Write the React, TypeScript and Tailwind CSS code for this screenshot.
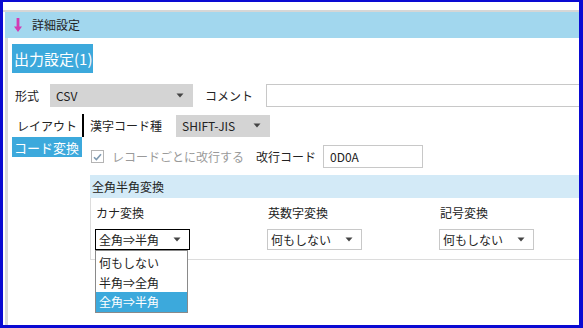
import React from 'react';

const Caret = () => (
  <svg width="8" height="5" viewBox="0 0 8 5" className="shrink-0">
    <path d="M0.5 0.5 L7.5 0.5 L4 4.5 Z" fill="#444" />
  </svg>
);

const GreySelect = ({ value, width }: { value: string; width: string }) => (
  <div className={`${width} h-full bg-[#d4d4d4] flex items-center justify-between pl-[6px] pr-[9px] text-[#222]`}>
    <span>{value}</span>
    <Caret />
  </div>
);

const App = () => {
  const columns = [
    { label: 'カナ変換', value: '全角⇒半角', open: true },
    { label: '英数字変換', value: '何もしない', open: false },
    { label: '記号変換', value: '何もしない', open: false },
  ];
  const options = ['何もしない', '半角⇒全角', '全角⇒半角'];

  return (
    <div className="w-[583px] h-[328px] overflow-hidden bg-white border-[#0a0ad2] border-l-[3px] border-t-[2px] border-r-[4px] border-b-[3px] flex flex-col text-[12px] leading-none font-['Noto_Sans_CJK_JP','Noto_Sans',sans-serif]">
      {/* top strip */}
      <div className="h-[8px] shrink-0" />
      <div className="h-[2px] shrink-0 bg-[#d6d6d6]" />

      {/* header */}
      <div className="ml-[2px] h-[26px] shrink-0 bg-[#a2d7ee] flex items-center">
        <svg width="8" height="14" viewBox="0 0 8 14" className="ml-[9px]">
          <path d="M2.6 0 H5.4 V8.5 H8 L4 14 L0 8.5 H2.6 Z" fill="#d23cb4" />
        </svg>
        <span className="ml-[10px] text-[#222]">詳細設定</span>
      </div>

      {/* body */}
      <div className="flex-1 ml-[2px] border-l-[3px] border-[#dadada] pl-[4px] flex flex-col">
        <div className="mt-[6px] h-[29px] w-[81px] bg-[#3ca9dc] text-white text-[15px] flex items-center pl-[2px]">
          出力設定(1)
        </div>

        {/* 形式 row */}
        <div className="mt-[11px] h-[23px] flex items-center text-[#222]">
          <span className="w-[38px] pl-[3px]">形式</span>
          <GreySelect value="CSV" width="w-[143px]" />
          <span className="ml-[12px] w-[61px]">コメント</span>
          <div className="flex-1 h-full border border-r-0 border-[#c8c8c8]" />
        </div>

        <div className="mt-[7px] flex">
          {/* side tabs */}
          <div className="flex flex-col w-[72px] shrink-0">
            <div className="h-[23px] border-r-2 border-black flex items-center justify-end pr-[5px] text-[#222]">
              レイアウト
            </div>
            <div className="w-[70px] h-[20px] bg-[#3ca9dc] text-white text-[13px] flex items-center pl-[2px]">
              コード変換
            </div>
          </div>

          <div className="ml-[6px] flex-1 flex flex-col relative">
            <div className="h-[23px] flex items-center text-[#222]">
              <span className="w-[86px]">漢字コード種</span>
              <div className="h-[22px] flex">
                <GreySelect value="SHIFT-JIS" width="w-[94px]" />
              </div>
            </div>

            <div className="mt-[8px] h-[23px] flex items-center">
              <div className="ml-[1px] w-[13px] h-[13px] border border-[#b4b4b4] bg-white flex items-center justify-center">
                <svg width="9" height="8" viewBox="0 0 9 8">
                  <path d="M1 4.2 L3.4 6.6 L8 1.2" fill="none" stroke="#7f9ab0" strokeWidth="1.6" />
                </svg>
              </div>
              <span className="ml-[8px] text-[#9a9a9a]">レコードごとに改行する</span>
              <span className="ml-[12px] text-[#222]">改行コード</span>
              <div className="ml-[7px] w-[100px] h-full border border-[#c8c8c8] flex items-center pl-[6px] text-[#222]">
                0D0A
              </div>
            </div>

            {/* 全角半角変換 group */}
            <div className="mt-[7px] flex flex-col">
              <div className="h-[23px] bg-[#d3eaf7] flex items-center pl-[2px] text-[#222]">全角半角変換</div>
              <div className="h-[62px] border-l border-b border-[#dcdcdc] flex pl-[4px] pt-[9px]">
                {columns.map((col) => (
                  <div key={col.label} className="w-[172px] flex flex-col">
                    <div className="h-[14px] pl-[1px] text-[#222]">{col.label}</div>
                    <div
                      className={`relative mt-[8px] w-[95px] h-[21px] border ${
                        col.open ? 'border-black' : 'border-[#c8c8c8]'
                      } flex items-center justify-between pl-[3px] pr-[8px] text-[#222]`}
                    >
                      <span>{col.value}</span>
                      <Caret />
                      {col.open && (
                        <div className="absolute left-[-1px] top-[20px] w-[93px] h-[63px] bg-white border border-[#8a8a8a] pt-[2px] flex flex-col z-10">
                          {options.map((opt) => (
                            <div
                              key={opt}
                              className={`h-[20px] flex items-center pl-[3px] ${
                                opt === col.value ? 'bg-[#3ca9dc] text-white' : 'text-[#222]'
                              }`}
                            >
                              {opt}
                            </div>
                          ))}
                        </div>
                      )}
                    </div>
                  </div>
                ))}
              </div>
            </div>
          </div>
        </div>
      </div>
    </div>
  );
};

export default App;
